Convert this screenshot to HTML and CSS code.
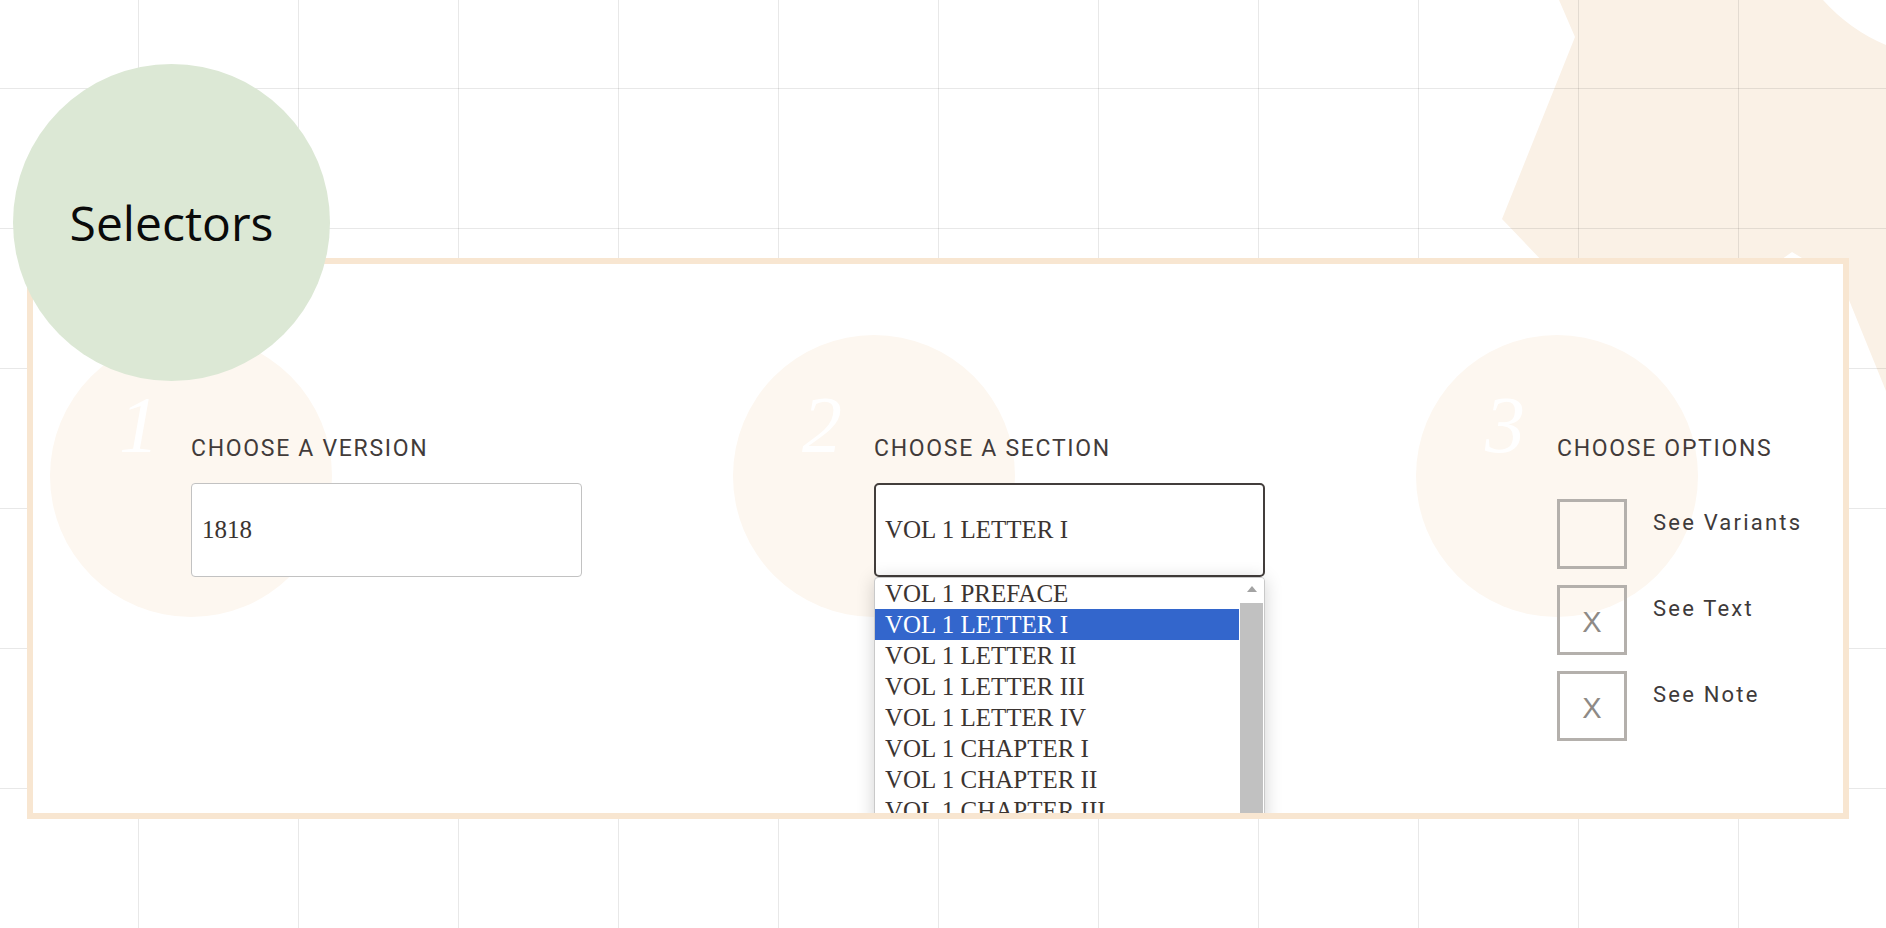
FILE: index.html
```html
<!DOCTYPE html>
<html lang="en">
<head>
<meta charset="utf-8">
<title>Selectors</title>
<link rel="stylesheet" href="styles.css">
</head>
<body>
<svg class="bg-shape" width="1886" height="928" viewBox="0 0 1886 928" aria-hidden="true">
  <path d="M1559,0 L1823,0 Q1850,30 1886,45 L1886,391 L1849,300 L1833,264 L1812,264 L1792,252 L1775,264 L1545,264 L1502,219 L1575,37 Z" fill="#faf1e6"/>
</svg>
<div class="grid"></div>
<main class="page">
  <section class="panel">
    <div class="col">
      <span class="col-circle"></span>
      <span class="col-num">1</span>
      <h3 class="col-label">CHOOSE A VERSION</h3>
      <div class="field field-input">1818</div>
    </div>
    <div class="col">
      <span class="col-circle"></span>
      <span class="col-num">2</span>
      <h3 class="col-label">CHOOSE A SECTION</h3>
      <div class="select-wrap">
        <div class="field field-select">VOL 1 LETTER I</div>
        <div class="listbox">
          <ul class="options-list">
            <li>VOL 1 PREFACE</li>
            <li class="selected">VOL 1 LETTER I</li>
            <li>VOL 1 LETTER II</li>
            <li>VOL 1 LETTER III</li>
            <li>VOL 1 LETTER IV</li>
            <li>VOL 1 CHAPTER I</li>
            <li>VOL 1 CHAPTER II</li>
            <li>VOL 1 CHAPTER III</li>
          </ul>
          <div class="scrollbar">
            <span class="scroll-arrow"></span>
            <span class="scroll-thumb"></span>
          </div>
        </div>
      </div>
    </div>
    <div class="col">
      <span class="col-circle"></span>
      <span class="col-num">3</span>
      <h3 class="col-label">CHOOSE OPTIONS</h3>
      <div class="options">
        <div class="option"><span class="box"></span><span class="opt-label">See Variants</span></div>
        <div class="option"><span class="box">X</span><span class="opt-label">See Text</span></div>
        <div class="option"><span class="box">X</span><span class="opt-label">See Note</span></div>
      </div>
    </div>
  </section>
  <div class="badge">Selectors</div>
</main>
</body>
</html>
```

FILE: styles.css
```css
html, body {
  margin: 0;
  padding: 0;
}

body {
  position: relative;
  width: 1886px;
  height: 928px;
  overflow: hidden;
  background: #ffffff;
  font-family: "Liberation Sans", Arial, sans-serif;
}

.bg-shape {
  position: absolute;
  left: 0;
  top: 0;
  z-index: 0;
}

.grid {
  position: absolute;
  inset: 0;
  z-index: 1;
  background-image:
    linear-gradient(to right, rgba(0, 0, 0, 0.09) 1px, transparent 1px),
    linear-gradient(to bottom, rgba(0, 0, 0, 0.09) 1px, transparent 1px);
  background-size: 160px 140px;
  background-position: 138px 88px;
}

.page {
  position: relative;
  z-index: 2;
  padding: 258px 0 0 27px;
}

.panel {
  position: relative;
  z-index: 1;
  box-sizing: border-box;
  width: 1822px;
  height: 561px;
  border: 6px solid #f8e6d1;
  background: #ffffff;
  overflow: hidden;
  display: grid;
  grid-template-columns: 683px 683px 1fr;
  padding: 173px 0 0 158px;
  align-items: start;
}

.col {
  position: relative;
  z-index: 0;
}

.col-circle {
  position: absolute;
  z-index: -1;
  left: -141px;
  top: -102px;
  width: 282px;
  height: 282px;
  border-radius: 50%;
  background: #fdf7f0;
}

.col-num {
  position: absolute;
  right: calc(100% + 32px);
  top: -52px;
  font-family: "Liberation Serif", "Times New Roman", serif;
  font-style: italic;
  font-size: 80px;
  line-height: 80px;
  color: #ffffff;
}

.col-label {
  margin: 0 0 23px;
  font-family: Roboto, "Liberation Sans", sans-serif;
  font-weight: 400;
  font-size: 23px;
  line-height: 23px;
  letter-spacing: 1.7px;
  color: #423b3a;
}

.field {
  box-sizing: border-box;
  width: 391px;
  height: 94px;
  display: flex;
  align-items: center;
  background: #ffffff;
  font-family: "Liberation Serif", "Times New Roman", serif;
  font-size: 25px;
  line-height: 28px;
  color: #3b3431;
}

.field-input {
  border: 1px solid #c2c2c2;
  border-radius: 4px;
  padding-left: 10px;
}

.select-wrap {
  position: relative;
  width: 391px;
}

.field-select {
  border: 2px solid #433e3c;
  border-radius: 5px;
  padding-left: 9px;
}

.listbox {
  position: absolute;
  left: 0;
  top: 100%;
  box-sizing: border-box;
  width: 391px;
  height: 250px;
  border: 1px solid #c9c9c9;
  border-radius: 4px 4px 0 0;
  background: #ffffff;
  box-shadow: 0 2px 18px rgba(0, 0, 0, 0.18);
  display: flex;
  overflow: hidden;
}

.options-list {
  flex: 1;
  margin: 0;
  padding: 0;
  list-style: none;
  font-family: "Liberation Serif", "Times New Roman", serif;
  font-size: 25px;
  color: #3b3431;
}

.options-list li {
  height: 31px;
  line-height: 31px;
  padding-left: 10px;
  white-space: nowrap;
}

.options-list li.selected {
  background: #3366cc;
  color: #ffffff;
}

.scrollbar {
  width: 25px;
  display: flex;
  flex-direction: column;
  background: #ffffff;
}

.scroll-arrow {
  height: 25px;
  display: flex;
  align-items: center;
  justify-content: center;
}

.scroll-arrow::before {
  content: "";
  width: 0;
  height: 0;
  border-left: 5px solid transparent;
  border-right: 5px solid transparent;
  border-bottom: 6px solid #a3a3a3;
  margin-top: -4px;
}

.scroll-thumb {
  flex: 1;
  margin: 0 1px 0 1px;
  background: #c1c1c1;
}

.options {
  display: flex;
  flex-direction: column;
  gap: 16px;
  margin-top: 39px;
}

.option {
  display: flex;
  align-items: flex-start;
  gap: 26px;
}

.box {
  box-sizing: border-box;
  width: 70px;
  height: 70px;
  border: 3px solid #b4b0ac;
  display: flex;
  align-items: center;
  justify-content: center;
  padding-top: 4px;
  font-family: "Liberation Sans", Arial, sans-serif;
  font-size: 29px;
  line-height: 29px;
  color: #8e8a86;
  background: transparent;
}

.opt-label {
  margin-top: 13px;
  font-family: Roboto, "Liberation Sans", sans-serif;
  font-size: 22px;
  line-height: 22px;
  letter-spacing: 2.2px;
  color: #3e3a3a;
}

.badge {
  position: absolute;
  z-index: 5;
  left: 13px;
  top: 64px;
  width: 317px;
  height: 317px;
  border-radius: 50%;
  background: #dce8d5;
  display: flex;
  align-items: center;
  justify-content: center;
  font-family: "Open Sans", "Noto Sans", sans-serif;
  font-size: 48px;
  color: #0a0a0a;
}
```
